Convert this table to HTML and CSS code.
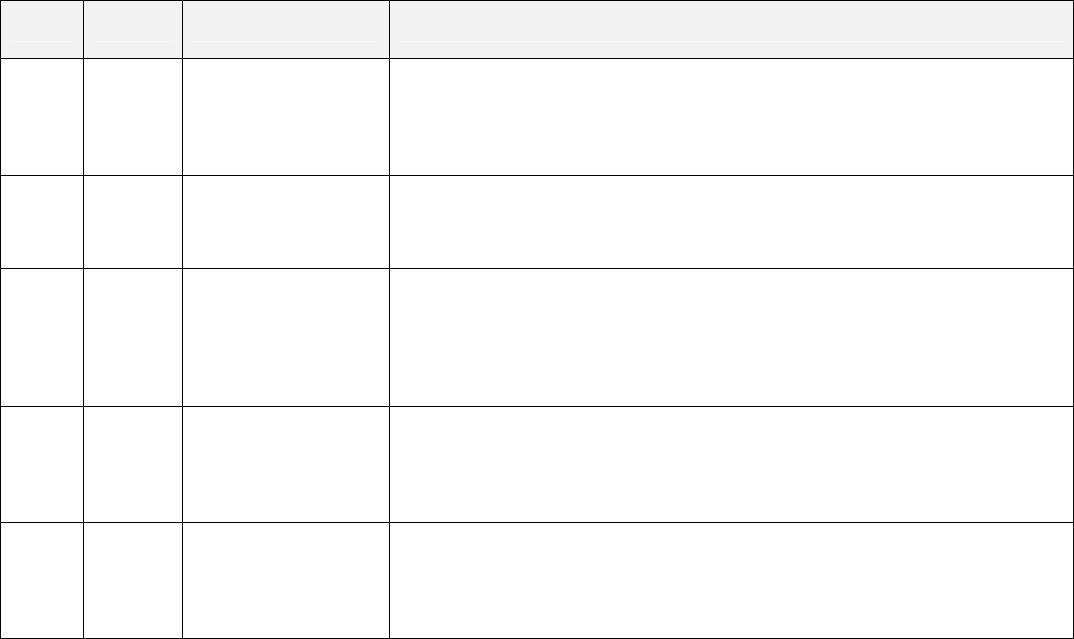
FILE: index.html
```html
<!DOCTYPE html>
<html lang="en">
<head>
<meta charset="utf-8">
<title>Table</title>
<link rel="stylesheet" href="styles.css">
</head>
<body>
<table class="grid">
  <colgroup>
    <col class="c1">
    <col class="c2">
    <col class="c3">
    <col class="c4">
  </colgroup>
  <thead>
    <tr class="head">
      <th><div class="rule"></div></th>
      <th><div class="rule"></div></th>
      <th><div class="rule"></div></th>
      <th><div class="rule"></div></th>
    </tr>
  </thead>
  <tbody>
    <tr class="r1"><td></td><td></td><td></td><td></td></tr>
    <tr class="r2"><td></td><td></td><td></td><td></td></tr>
    <tr class="r3"><td></td><td></td><td></td><td></td></tr>
    <tr class="r4"><td></td><td></td><td></td><td></td></tr>
    <tr class="r5"><td></td><td></td><td></td><td></td></tr>
  </tbody>
</table>
</body>
</html>
```

FILE: styles.css
```css
html, body {
  margin: 0;
  padding: 0;
  background: #ffffff;
  font-family: "Liberation Sans", Arial, sans-serif;
}

.grid {
  border-collapse: separate;
  border-spacing: 0;
  table-layout: fixed;
  width: 1074px;
}

.c1 { width: 84px; }
.c2 { width: 99px; }
.c3 { width: 207px; }
.c4 { width: 684px; }

.grid th,
.grid td {
  box-sizing: border-box;
  padding: 0;
  border-right: 1px solid #000;
  border-bottom: 1px solid #000;
  vertical-align: top;
}

.grid th:first-child,
.grid td:first-child {
  border-left: 1px solid #000;
}

.grid th {
  border-top: 1px solid #000;
  background: #f2f2f2;
  height: 59px;
}

.rule {
  margin: 40px 10px 0;
  height: 1px;
  background: #f8f8f8;
}

.r1 td { height: 117px; }
.r2 td { height: 93px; }
.r3 td { height: 138px; }
.r4 td { height: 116px; }
.r5 td { height: 116px; }
```
